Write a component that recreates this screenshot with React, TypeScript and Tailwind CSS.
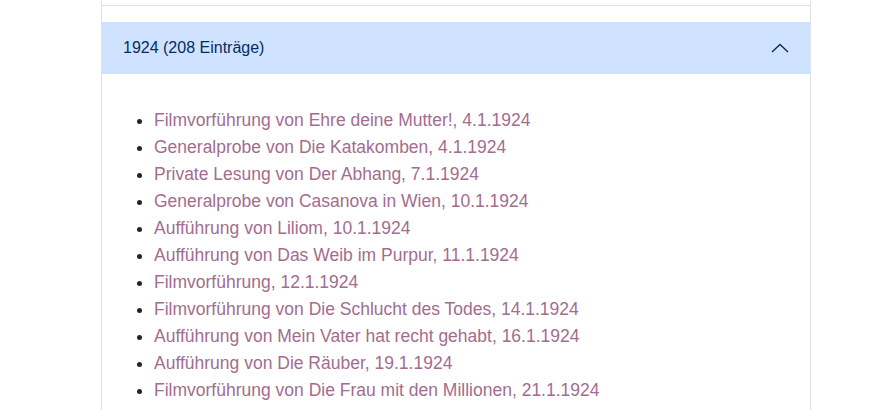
import React from 'react';

const entries = [
  'Filmvorführung von Ehre deine Mutter!, 4.1.1924',
  'Generalprobe von Die Katakomben, 4.1.1924',
  'Private Lesung von Der Abhang, 7.1.1924',
  'Generalprobe von Casanova in Wien, 10.1.1924',
  'Aufführung von Liliom, 10.1.1924',
  'Aufführung von Das Weib im Purpur, 11.1.1924',
  'Filmvorführung, 12.1.1924',
  'Filmvorführung von Die Schlucht des Todes, 14.1.1924',
  'Aufführung von Mein Vater hat recht gehabt, 16.1.1924',
  'Aufführung von Die Räuber, 19.1.1924',
  'Filmvorführung von Die Frau mit den Millionen, 21.1.1924',
];

function ChevronUp() {
  return (
    <svg width="18" height="10" viewBox="0 0 18 10" fill="none">
      <path d="M1 9L9 1.5L17 9" stroke="#052c65" strokeWidth="1.4" />
    </svg>
  );
}

export default function App() {
  return (
    <div
      className="h-[410px] overflow-hidden bg-white"
      style={{ fontFamily: '"Liberation Sans", Arial, sans-serif' }}
    >
      <div className="ml-[101px] h-full w-[710px] border-x border-[#dee2e6]">
        {/* previous year, collapsed */}
        <div className="h-[6px] border-b border-[#dee2e6]" />
        <div className="h-[16px]" />

        {/* open year */}
        <button className="flex h-[52px] w-full items-center justify-between bg-[#cfe2ff] pb-px pl-[21px] pr-[21px] text-left text-[16px] text-[#052c65]">
          <span>1924 (208 Einträge)</span>
          <ChevronUp />
        </button>
        <div className="px-5 pt-[33px]">
          <ul className="list-disc pl-[32px] text-[17.5px] leading-[27px] text-[#a26d8e] marker:text-[#212529]">
            {entries.map((e) => (
              <li key={e}>{e}</li>
            ))}
          </ul>
        </div>
      </div>
    </div>
  );
}
